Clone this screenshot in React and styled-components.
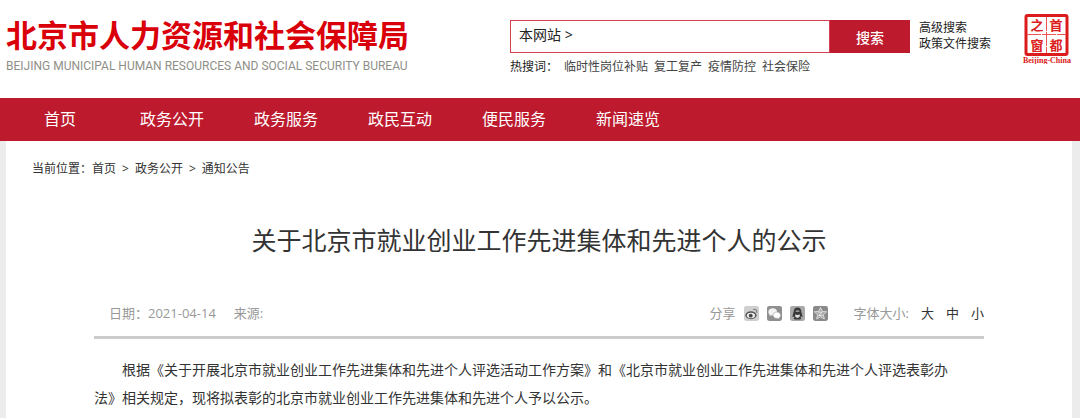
import React from "react";
import styled, { createGlobalStyle } from "styled-components";

const GlobalStyle = createGlobalStyle`
  * {
    box-sizing: border-box;
  }
  body {
    margin: 0;
    background: #ececec;
    color: #333;
    font-family: "Open Sans", "Noto Sans CJK SC", sans-serif;
    font-size: 13px;
  }
  a {
    color: inherit;
    text-decoration: none;
  }
  button,
  input {
    font-family: inherit;
  }
`;

const Header = styled.header`
  display: grid;
  grid-template-columns: minmax(0, 1fr) 400px 112px 50px;
  align-items: start;
  height: 98px;
  padding: 14px 8px 0 6px;
  background: #fff;
`;

const Brand = styled.a`
  display: block;
  white-space: nowrap;
`;

const BrandName = styled.div`
  color: #d9000a;
  font-size: 31px;
  font-weight: 700;
  line-height: 42px;
`;

const BrandEnglish = styled.div`
  color: #8f8f88;
  font-family: Roboto, "Liberation Sans", sans-serif;
  font-size: 12px;
  line-height: 20px;
`;

const SearchArea = styled.div`
  padding-top: 6px;
`;

const SearchForm = styled.form`
  display: flex;
  height: 33px;
`;

const SearchBox = styled.label`
  display: flex;
  flex: 1;
  min-width: 0;
  padding: 0 8px;
  border: 1px solid #d2414f;
  color: #222;
  font-size: 14px;
  line-height: 28px;
  white-space: nowrap;
`;

const SearchInput = styled.input`
  flex: 1;
  min-width: 0;
  border: 0;
  outline: 0;
  background: none;
  font-size: 14px;
`;

const SearchButton = styled.button`
  width: 80px;
  border: 0;
  background: #bd1a2d;
  color: #fff;
  font-size: 14px;
  font-weight: 500;
  cursor: pointer;
`;

const HotWords = styled.div`
  display: flex;
  gap: 6px;
  padding-top: 5px;
  color: #444;
  font-size: 12px;
  line-height: 18px;
  white-space: nowrap;
`;

const HotLabel = styled.span`
  color: #222;
`;

const SideLinks = styled.div`
  display: flex;
  flex-direction: column;
  padding: 6px 0 0 9px;
  color: #222;
  font-size: 12px;
  line-height: 16px;
  white-space: nowrap;
`;

const Nav = styled.nav`
  display: flex;
  gap: 50px;
  height: 43px;
  padding-left: 44px;
  background: #bd1a2d;
  color: #fff;
  font-size: 16px;
  line-height: 43px;
  white-space: nowrap;
`;

const NavLink = styled.a`
  &:first-child {
    margin-right: 14px;
  }
`;

const Panel = styled.main`
  margin: 0 8px 0 6px;
  padding-bottom: 8px;
  background: #fff;
`;

const Crumbs = styled.div`
  display: flex;
  gap: 6px;
  padding: 18px 26px 0;
  font-size: 12px;
  line-height: 20px;
`;

const Article = styled.article`
  padding: 0 88px;
`;

const Title = styled.h1`
  margin: 43px 0 0;
  font-size: 25px;
  font-weight: 400;
  line-height: 36px;
  text-align: center;
`;

const Meta = styled.div`
  display: flex;
  align-items: center;
  height: 81px;
  padding: 32px 0 0 15px;
  border-bottom: 3px solid #ccc;
  color: #999;
  font-size: 13px;
  line-height: 20px;
`;

const MetaItem = styled.span`
  margin-right: 18px;
`;

const Share = styled.div`
  display: flex;
  align-items: center;
  gap: 8px;
  margin: 0 26px 0 auto;
`;

const ShareButton = styled.button`
  display: block;
  width: 15px;
  height: 15px;
  padding: 0;
  border: 0;
  background: none;
  cursor: pointer;

  svg {
    display: block;
  }
`;

const FontSizes = styled.div`
  display: flex;
  gap: 12px;
`;

const SizeButton = styled.button`
  padding: 0;
  border: 0;
  background: none;
  color: #333;
  font-size: 13px;
  line-height: 20px;
  cursor: pointer;
`;

const Paragraph = styled.p`
  margin: 17px 0 0;
  padding-right: 20px;
  font-size: 14px;
  line-height: 28px;
  text-indent: 2em;
`;

const hotWords = ["临时性岗位补贴", "复工复产", "疫情防控", "社会保险"];
const navItems = ["首页", "政务公开", "政务服务", "政民互动", "便民服务", "新闻速览"];

const shareIcons = [
  {
    name: "微博",
    bg: "#cfcfcf",
    art: (
      <>
        <ellipse cx="6.5" cy="8.6" rx="5.2" ry="3.7" fill="#555" />
        <ellipse cx="6.5" cy="8.9" rx="3.8" ry="2.5" fill="#eee" />
        <circle cx="6.3" cy="9" r="1.8" fill="#444" />
        <path d="M8.6 3.2c2.4-.5 3.9 1.3 3.3 3.3" fill="none" stroke="#777" />
      </>
    ),
  },
  {
    name: "微信",
    bg: "#8f8f8f",
    art: (
      <>
        <path d="M5.4 2.2C3 2.2 1.2 3.7 1.2 5.6c0 1 .6 1.9 1.5 2.5l-.4 1.4 1.6-.8c3 .5 5.6-.9 5.6-3.1 0-1.9-1.7-3.4-4.1-3.4z" fill="#f2f2f2" />
        <path d="M9.3 5.6c-2.1 0-3.7 1.4-3.7 3.1 0 2 2.2 3.4 4.6 2.9l1.5.8-.4-1.3c.9-.6 1.5-1.4 1.5-2.4 0-1.7-1.5-3.1-3.5-3.1z" fill="#fff" stroke="#8f8f8f" strokeWidth=".5" />
      </>
    ),
  },
  {
    name: "QQ",
    bg: "#a9a9a9",
    art: (
      <>
        <path d="M7 1.5C4.800 1.500 3.700 3 3.500 5.200L2.400 9.200c-.3 1.300.2 1.400 1.200.3l.6 1.300c-1.200.8-.8 1.700.8 1.700h4c1.600 0 2-.9.8-1.700l.6-1.300c1 1.100 1.500 1 1.200-.3l-1.100-4C10.300 3 9.200 1.500 7 1.500z" fill="#383838" />
        <path d="M4.800 8c1.400.6 3 .6 4.400 0 .3 1.900-.7 3.100-2.200 3.100S4.500 9.900 4.800 8z" fill="#ddd" />
        <path d="M5.300 4.800h3.400" stroke="#ccc" />
      </>
    ),
  },
  {
    name: "QQ空间",
    bg: "#8a8a8a",
    art: (
      <>
        <path d="M7 1.300l1.700 3.700 4 .4-3 2.700.9 4L7 10.100l-3.600 2 .9-4-3-2.700 4-.4z" fill="#aaa" stroke="#e2e2e2" strokeWidth=".8" />
        <path d="M5 5.800h3.600L5.300 8.900H9" fill="none" stroke="#eee" strokeWidth=".8" />
      </>
    ),
  },
];

const Seal = () => (
  <svg width="50" height="50" viewBox="0 0 50 50" role="img" aria-label="首都之窗">
    <rect x="4" y="1.500" width="41" height="39" rx="1.500" fill="#fff" stroke="#dc1c1c" strokeWidth="3" />
    <path d="M24.500 3v36M5 20.500h39" stroke="#e55" strokeWidth="1" strokeDasharray="14 1" />
    <g
      fill="#dc2020"
      fontFamily="Noto Sans CJK SC, sans-serif"
      fontSize="13"
      fontWeight="700"
      textAnchor="middle"
    >
      <text x="15" y="16">之</text>
      <text x="34" y="16">首</text>
      <text x="15" y="36">窗</text>
      <text x="34" y="36">都</text>
    </g>
    <text x="25" y="49" fill="#dc2020" fontFamily="Liberation Serif, serif" fontSize="8" fontWeight="700" textAnchor="middle">
      Beijing-China
    </text>
  </svg>
);

const App = () => {
  return (
    <>
      <GlobalStyle />
      <Header>
        <Brand href="#">
          <BrandName>北京市人力资源和社会保障局</BrandName>
          <BrandEnglish>
            BEIJING MUNICIPAL HUMAN RESOURCES AND SOCIAL SECURITY BUREAU
          </BrandEnglish>
        </Brand>
        <SearchArea>
          <SearchForm onSubmit={(e) => e.preventDefault()}>
            <SearchBox>
              本网站 &gt;
              <SearchInput type="text" name="q" />
            </SearchBox>
            <SearchButton type="submit">搜索</SearchButton>
          </SearchForm>
          <HotWords>
            <HotLabel>热搜词：</HotLabel>
            {hotWords.map((word) => (
              <a href="#" key={word}>{word}</a>
            ))}
          </HotWords>
        </SearchArea>
        <SideLinks>
          <a href="#">高级搜索</a>
          <a href="#">政策文件搜索</a>
        </SideLinks>
        <Seal />
      </Header>
      <Nav>
        {navItems.map((item) => (
          <NavLink href="#" key={item}>{item}</NavLink>
        ))}
      </Nav>
      <Panel>
        <Crumbs>
          <span>当前位置：<a href="#">首页</a></span>
          <span>&gt;</span>
          <a href="#">政务公开</a>
          <span>&gt;</span>
          <a href="#">通知公告</a>
        </Crumbs>
        <Article>
          <Title>关于北京市就业创业工作先进集体和先进个人的公示</Title>
          <Meta>
            <MetaItem>日期：2021-04-14</MetaItem>
            <MetaItem>来源:</MetaItem>
            <Share>
              分享
              {shareIcons.map(({ name, bg, art }) => (
                <ShareButton type="button" key={name} aria-label={name}>
                  <svg width="15" height="15" viewBox="0 0 14 14">
                    <rect width="14" height="14" rx="2" fill={bg} />
                    {art}
                  </svg>
                </ShareButton>
              ))}
            </Share>
            <FontSizes>
              <span>字体大小:</span>
              <SizeButton type="button">大</SizeButton>
              <SizeButton type="button">中</SizeButton>
              <SizeButton type="button">小</SizeButton>
            </FontSizes>
          </Meta>
          <Paragraph>
            根据《关于开展北京市就业创业工作先进集体和先进个人评选活动工作方案》和《北京市就业创业工作先进集体和先进个人评选表彰办法》相关规定，现将拟表彰的北京市就业创业工作先进集体和先进个人予以公示。
          </Paragraph>
        </Article>
      </Panel>
    </>
  );
};

export default App;
